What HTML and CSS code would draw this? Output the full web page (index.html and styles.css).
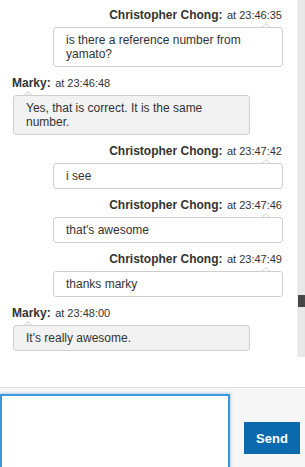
FILE: index.html
```html
<!DOCTYPE html>
<html>
<head>
<meta charset="utf-8">
<link rel="stylesheet" href="styles.css">
</head>
<body>
<div class="chat-pane">
  <div class="messages">
    <div class="msg mine">
      <div class="label"><span class="name">Christopher Chong:</span> <span class="time">at 23:46:35</span></div>
      <div class="bubble">is there a reference number from yamato?</div>
    </div>
    <div class="msg theirs">
      <div class="label"><span class="name">Marky:</span> <span class="time">at 23:46:48</span></div>
      <div class="bubble">Yes, that is correct. It is the same number.</div>
    </div>
    <div class="msg mine">
      <div class="label"><span class="name">Christopher Chong:</span> <span class="time">at 23:47:42</span></div>
      <div class="bubble">i see</div>
    </div>
    <div class="msg mine">
      <div class="label"><span class="name">Christopher Chong:</span> <span class="time">at 23:47:46</span></div>
      <div class="bubble">that's awesome</div>
    </div>
    <div class="msg mine">
      <div class="label"><span class="name">Christopher Chong:</span> <span class="time">at 23:47:49</span></div>
      <div class="bubble">thanks marky</div>
    </div>
    <div class="msg theirs">
      <div class="label"><span class="name">Marky:</span> <span class="time">at 23:48:00</span></div>
      <div class="bubble">It's really awesome.</div>
    </div>
  </div>
  <div class="scrollbar"><div class="thumb"></div></div>
</div>
<div class="spacer"></div>
<div class="composer">
  <textarea class="input"></textarea>
  <button class="send">Send</button>
</div>
</body>
</html>
```

FILE: styles.css
```css
html, body {
  margin: 0;
  padding: 0;
}
body {
  width: 305px;
  height: 467px;
  overflow: hidden;
  background: #ffffff;
  font-family: "Liberation Sans", Arial, sans-serif;
  color: #333333;
}
.chat-pane {
  display: flex;
  height: 357px;
}
.messages {
  flex: 1;
  padding: 7px 14px 0 13px;
  overflow: hidden;
}
.msg {
  display: flex;
  flex-direction: column;
}
.msg + .msg {
  margin-top: 8px;
}
.label {
  line-height: 14px;
  height: 14px;
  white-space: nowrap;
}
.mine .label {
  text-align: right;
  padding-right: 1px;
}
.theirs .label {
  margin-left: -1px;
}
.name {
  font-weight: bold;
  font-size: 12px;
}
.time {
  font-size: 11px;
}
.bubble {
  position: relative;
  margin-top: 6px;
  border: 1px solid #cfcfcf;
  border-radius: 3px;
  padding: 5px 12px;
  font-size: 12px;
  line-height: 14px;
  background: #ffffff;
}
.mine .bubble {
  width: 204px;
  align-self: flex-end;
}
.theirs .bubble {
  width: 211px;
  align-self: flex-start;
  background: #f2f2f2;
}
.bubble::before,
.bubble::after {
  content: "";
  position: absolute;
  width: 0;
  height: 0;
  border-style: solid;
}
.bubble::before {
  top: -5px;
  border-width: 0 4px 4px 4px;
  border-color: transparent transparent #cfcfcf transparent;
}
.bubble::after {
  top: -4px;
  border-width: 0 3px 3px 3px;
  border-color: transparent transparent #ffffff transparent;
}
.mine .bubble::before { right: 12px; }
.mine .bubble::after { right: 13px; }
.theirs .bubble::before { left: 10px; }
.theirs .bubble::after {
  left: 11px;
  border-color: transparent transparent #f2f2f2 transparent;
}
.scrollbar {
  width: 8px;
  background: #e8e8e8;
  border-left: 1px solid #f0f0f0;
  box-sizing: border-box;
}
.thumb {
  margin-top: 295px;
  height: 12px;
  background: #474747;
}
.spacer {
  height: 30px;
}
.composer {
  display: flex;
  align-items: flex-start;
  height: 79px;
  background: #f6f6f6;
  border-top: 1px solid #e0e0e0;
  overflow: hidden;
}
.input {
  display: block;
  margin: 6px 0 0 0;
  width: 230px;
  height: 90px;
  box-sizing: border-box;
  border: 2px solid #3d98dc;
  box-shadow: 0 0 3px rgba(70, 150, 220, 0.7);
  background: #ffffff;
  resize: none;
  outline: none;
  padding: 0;
}
.send {
  margin: 34px 0 0 14px;
  width: 56px;
  height: 32px;
  border: none;
  background: #0a6aad;
  color: #ffffff;
  font-family: "Liberation Sans", Arial, sans-serif;
  font-weight: bold;
  font-size: 13px;
  padding: 0;
}
```
